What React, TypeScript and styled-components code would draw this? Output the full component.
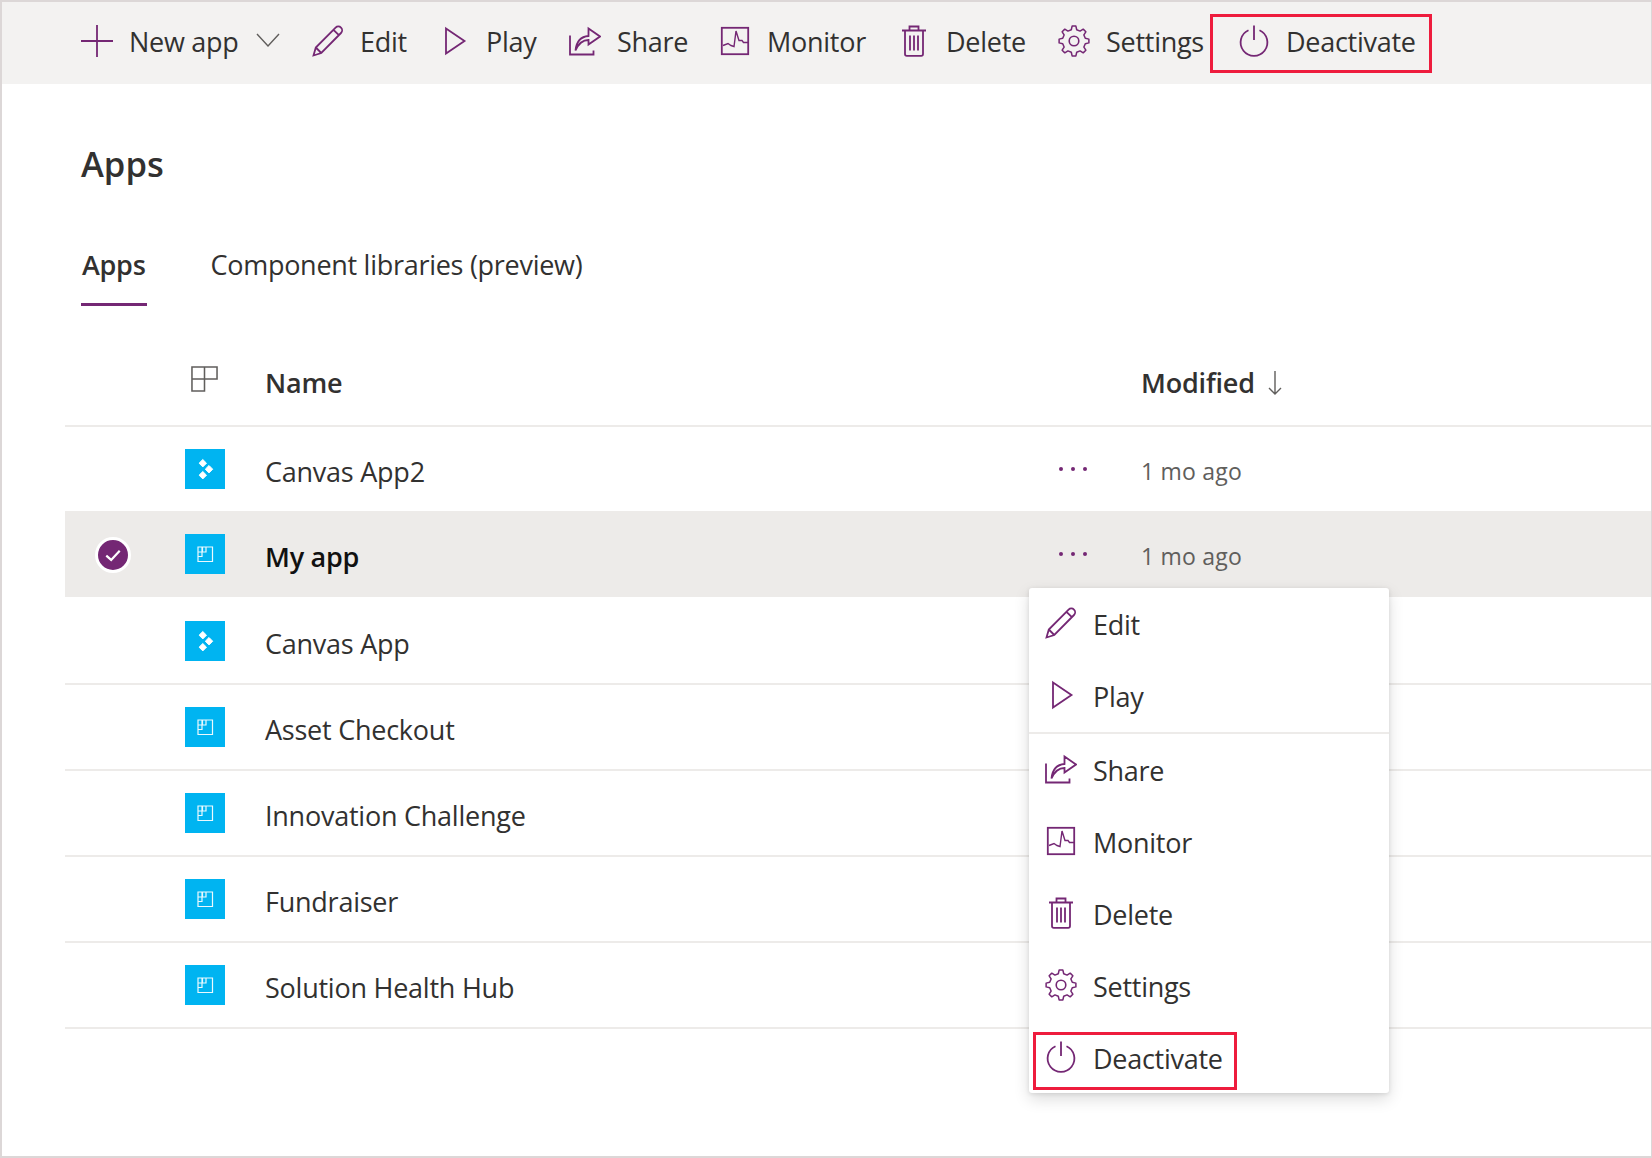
import React from "react";
import styled, { createGlobalStyle } from "styled-components";

const PURPLE = "#742774";
const RED = "#ee1c3d";
const LINE = "#edebe9";

const Global = createGlobalStyle`
  html, body { margin: 0; padding: 0; background: #fff; }
  body { font-family: "Open Sans", "Noto Sans", "Liberation Sans", sans-serif; color: #323130; }
`;

const Page = styled.div`
  position: relative;
  box-sizing: border-box;
  width: 1652px;
  height: 1158px;
  border: 2px solid #dcd7d7;
  border-right-width: 1px;
  background: #fff;
  overflow: hidden;
`;

const Glyph = styled.svg`
  width: 32px;
  height: 32px;
  flex: none;
  margin-bottom: 2px;
  fill: none;
  stroke: ${PURPLE};
  stroke-width: 1.8;
`;

const Label = styled.span`
  position: relative;
  top: 0;
`;

const Toolbar = styled.div`
  display: flex;
  align-items: center;
  height: 82px;
  padding-left: 79px;
  background: #f3f2f1;

  ${Glyph} { margin-bottom: 5px; }
  ${Label} { top: -2px; }
`;

const ToolItem = styled.div<{ $width?: number; $boxed?: boolean }>`
  display: flex;
  align-items: center;
  gap: 16px;
  flex: none;
  box-sizing: border-box;
  font-size: 27px;
  letter-spacing: -0.27px;
  white-space: nowrap;
  width: ${(p) => (p.$width ? `${p.$width}px` : "auto")};
  ${(p) =>
    p.$boxed
      ? `height: 59px; border: 3px solid ${RED}; padding: 0 13px 0 25px;`
      : ""}
`;

const Caret = styled.svg`
  width: 24px;
  height: 14px;
  margin: 0 0 6px 1px;
  fill: none;
  stroke: #605e5c;
  stroke-width: 1.4;
  flex: none;
`;

const Head = styled.div`
  padding: 55px 0 0 79px;
`;

const Title = styled.h1`
  margin: 0;
  height: 50px;
  line-height: 50px;
  font-size: 34.6px;
  font-weight: 600;
  color: #323130;
`;

const Tabs = styled.div`
  display: flex;
  gap: 63px;
  margin-top: 56px;
`;

const Tab = styled.div<{ $active?: boolean }>`
  box-sizing: border-box;
  height: 61px;
  line-height: 40px;
  padding: 0 1px;
  font-size: 27px;
  letter-spacing: -0.28px;
  font-weight: ${(p) => (p.$active ? 600 : 400)};
  border-bottom: 3px solid ${(p) => (p.$active ? PURPLE : "transparent")};
`;

const List = styled.div`
  margin: 20px 0 0 63px;
`;

const Columns = "120px 80px 794px 82px 1fr";

const HeaderRow = styled.div`
  display: grid;
  grid-template-columns: ${Columns};
  align-items: center;
  box-sizing: border-box;
  height: 101px;
  padding-top: 14px;
  border-bottom: 2px solid ${LINE};
  font-size: 27px;
  font-weight: 600;
  letter-spacing: -0.2px;
`;

const ColumnGlyph = styled.svg`
  grid-column: 2;
  width: 27px;
  height: 27px;
  margin: -6px 0 0 6px;
  fill: none;
  stroke: #605e5c;
  stroke-width: 1.6;
`;

const HeaderName = styled.div`
  grid-column: 3;
`;

const HeaderModified = styled.div`
  grid-column: 5;
  display: flex;
  align-items: center;
  gap: 13px;
`;

const SortArrow = styled.svg`
  width: 14px;
  height: 24px;
  fill: none;
  stroke: #605e5c;
  stroke-width: 1.4;
`;

const Row = styled.div<{ $selected?: boolean }>`
  display: grid;
  grid-template-columns: ${Columns};
  align-items: center;
  box-sizing: border-box;
  height: 86px;
  font-size: 27px;
  letter-spacing: -0.24px;
  ${(p) =>
    p.$selected
      ? `background: ${LINE}; margin: -2px 0 2px; color: #111; font-weight: 600;`
      : `border-bottom: 2px solid ${LINE};`}
`;

const Check = styled.div`
  display: flex;
  align-items: center;
  justify-content: center;
  box-sizing: border-box;
  width: 36px;
  height: 36px;
  margin: 1px 0 0 30px;
  border: 3px solid #fff;
  border-radius: 50%;
  background: ${PURPLE};
`;

const CheckMark = styled.svg`
  width: 22px;
  height: 22px;
  fill: none;
  stroke: #fff;
  stroke-width: 1.8;
`;

const Tile = styled.div`
  grid-column: 2;
  width: 40px;
  height: 40px;
  background: #00b4f1;
`;

const TileGlyph = styled.svg`
  display: block;
  width: 40px;
  height: 40px;
`;

const Name = styled.div`
  grid-column: 3;
  position: relative;
  top: 2px;
`;

const Dots = styled.svg`
  grid-column: 4;
  width: 32px;
  height: 8px;
  fill: ${PURPLE};
  margin-top: -1px;
`;

const When = styled.div`
  grid-column: 5;
  position: relative;
  top: 2px;
  font-size: 23px;
  font-weight: 400;
  letter-spacing: 0.2px;
  color: #605e5c;
`;

const Menu = styled.div`
  position: absolute;
  left: 1027px;
  top: 586px;
  box-sizing: border-box;
  width: 360px;
  height: 505px;
  background: #fff;
  border-radius: 3px;
  box-shadow: 0 6px 16px rgba(0, 0, 0, 0.14), 0 1px 4px rgba(0, 0, 0, 0.1);
`;

const MenuItem = styled.div<{ $boxed?: boolean }>`
  display: flex;
  align-items: center;
  gap: 16px;
  box-sizing: border-box;
  font-size: 27px;
  letter-spacing: -0.27px;
  white-space: nowrap;
  ${(p) =>
    p.$boxed
      ? `width: 204px; height: 58px; margin: 10px 0 0 4px; padding: 0 0 6px 9px; border: 3px solid ${RED};`
      : "height: 72px; padding-left: 16px;"}
`;

const Divider = styled.div`
  height: 2px;
  background: ${LINE};
`;

const gearPath = (() => {
  const teeth = 8;
  const pts: string[] = [];
  for (let i = 0; i < teeth; i++) {
    const a = (i * 2 * Math.PI) / teeth - Math.PI / 2;
    const step = (2 * Math.PI) / teeth;
    const seq: [number, number][] = [
      [11.6, a - step * 0.3],
      [15, a - step * 0.16],
      [15, a + step * 0.16],
      [11.6, a + step * 0.3],
    ];
    seq.forEach(([r, t]) => pts.push(`${(16 + r * Math.cos(t)).toFixed(2)} ${(16 + r * Math.sin(t)).toFixed(2)}`));
  }
  return `M${pts.join(" L")} Z`;
})();

type IconName = "plus" | "edit" | "play" | "share" | "monitor" | "delete" | "settings" | "power";

const Icon = ({ name }: { name: IconName }) => (
  <Glyph viewBox="0 0 32 32" aria-hidden="true">
    {name === "plus" && <path d="M0 16H32M16 0V32" strokeWidth="1.8" />}
    {name === "edit" && (
      <path d="M1.5 30.5L3.8 22.5 23.6 2.6a3.6 3.6 0 0 1 5.4 5.4L9.3 28Zm2.3-8L9.3 28M21.5 4.8l5.4 5.4" />
    )}
    {name === "play" && <path d="M8 3.5L26.5 16 8 28.5Z" />}
    {name === "share" && (
      <path d="M1 10.5V29.5H24.5V25.5M6.5 25.5C7.5 16 12 11.5 19.5 11V3.5L31 11.5 19.5 19.5V15C14 15 9.5 18.5 6.5 25.5Z" />
    )}
    {name === "monitor" && (
      <>
        <rect x="2.8" y="2.8" width="26.4" height="26.4" />
        <path d="M4 20.5L9 18.5 12 20.5 15 21.5 17 6 20 15.5H23L24.5 17.5H29" strokeWidth="1.4" />
      </>
    )}
    {name === "delete" && (
      <path d="M4 5.5H28M7 5.5V29a1.8 1.8 0 0 0 1.8 1.8H23.2A1.8 1.8 0 0 0 25 29V5.5M11.5 5.5V1.5H20.5V5.5M12 10.5V25.5M16 10.5V25.5M20 10.5V25.5" />
    )}
    {name === "settings" && (
      <>
        <path d={gearPath} strokeLinejoin="round" strokeWidth="1.5" />
        <circle cx="16" cy="16" r="4.8" strokeWidth="1.6" />
      </>
    )}
    {name === "power" && (
      <path d="M10.5 5.2A13.4 13.4 0 1 0 21.5 5.2M16 0.5V15" />
    )}
  </Glyph>
);

const CanvasTile = () => (
  <TileGlyph viewBox="0 0 40 40" aria-hidden="true">
    <g fill="#fff" stroke="#fff" strokeWidth="1" strokeLinejoin="round">
      <path d="M17.8 10.5L21.5 14.2 17.8 17.9 14.1 14.2Z" />
      <path d="M24 16.5L27.7 20.2 24 23.9 20.3 20.2Z" />
      <path d="M17.8 22.5L21.5 26.2 17.8 29.9 14.1 26.2Z" />
    </g>
  </TileGlyph>
);

const ModelTile = () => (
  <TileGlyph viewBox="0 0 40 40" aria-hidden="true">
    <path
      d="M18 13H27.5V27.5H13V22.5H17V18H21V13M13 13H17.5V18H13ZM17 13V18M13 18V22.5H17"
      fill="none"
      stroke="#fff"
      strokeWidth="1.2"
      opacity="0.92"
    />
  </TileGlyph>
);

const toolItems: { name: IconName; label: string; width: number }[] = [
  { name: "edit", label: "Edit", width: 126 },
  { name: "play", label: "Play", width: 131 },
  { name: "share", label: "Share", width: 150 },
  { name: "monitor", label: "Monitor", width: 179 },
  { name: "delete", label: "Delete", width: 160 },
  { name: "settings", label: "Settings", width: 152 },
];

const rows: { label: string; kind: "canvas" | "model"; selected?: boolean; date?: boolean }[] = [
  { label: "Canvas App2", kind: "canvas", date: true },
  { label: "My app", kind: "model", selected: true, date: true },
  { label: "Canvas App", kind: "canvas" },
  { label: "Asset Checkout", kind: "model" },
  { label: "Innovation Challenge", kind: "model" },
  { label: "Fundraiser", kind: "model" },
  { label: "Solution Health Hub", kind: "model" },
];

export default function App() {
  return (
    <Page>
      <Global />
      <Toolbar>
        <ToolItem $width={231}>
          <Icon name="plus" />
          <Label>New app</Label>
          <Caret viewBox="0 0 24 14" aria-hidden="true">
            <path d="M1 1L12 13 23 1" />
          </Caret>
        </ToolItem>
        {toolItems.map((t) => (
          <ToolItem key={t.label} $width={t.width}>
            <Icon name={t.name} />
            <Label>{t.label}</Label>
          </ToolItem>
        ))}
        <ToolItem $boxed>
          <Icon name="power" />
          <Label>Deactivate</Label>
        </ToolItem>
      </Toolbar>

      <Head>
        <Title>Apps</Title>
        <Tabs>
          <Tab $active>Apps</Tab>
          <Tab>Component libraries (preview)</Tab>
        </Tabs>
      </Head>

      <List>
        <HeaderRow>
          <ColumnGlyph viewBox="0 0 28 28" aria-hidden="true">
            <path d="M1 1H27V13.5H14V26H1ZM14 1V13.5M1 13.5H14" />
          </ColumnGlyph>
          <HeaderName>Name</HeaderName>
          <HeaderModified>
            Modified
            <SortArrow viewBox="0 0 14 24" aria-hidden="true">
              <path d="M7 0V23M1 17L7 23 13 17" />
            </SortArrow>
          </HeaderModified>
        </HeaderRow>
        {rows.map((r) => (
          <Row key={r.label} $selected={r.selected}>
            {r.selected && (
              <Check>
                <CheckMark viewBox="0 0 18 18" aria-hidden="true">
                  <path d="M3.5 9.5L7.5 13 14.5 5.5" />
                </CheckMark>
              </Check>
            )}
            <Tile>{r.kind === "canvas" ? <CanvasTile /> : <ModelTile />}</Tile>
            <Name>{r.label}</Name>
            {r.date && (
              <>
                <Dots viewBox="0 0 32 8" aria-hidden="true">
                  <circle cx="2" cy="4" r="2" />
                  <circle cx="14" cy="4" r="2" />
                  <circle cx="26" cy="4" r="2" />
                </Dots>
                <When>1 mo ago</When>
              </>
            )}
          </Row>
        ))}
      </List>

      <Menu>
        <MenuItem><Icon name="edit" /><Label>Edit</Label></MenuItem>
        <MenuItem><Icon name="play" /><Label>Play</Label></MenuItem>
        <Divider />
        <MenuItem><Icon name="share" /><Label>Share</Label></MenuItem>
        <MenuItem><Icon name="monitor" /><Label>Monitor</Label></MenuItem>
        <MenuItem><Icon name="delete" /><Label>Delete</Label></MenuItem>
        <MenuItem><Icon name="settings" /><Label>Settings</Label></MenuItem>
        <MenuItem $boxed><Icon name="power" /><Label>Deactivate</Label></MenuItem>
      </Menu>
    </Page>
  );
}
